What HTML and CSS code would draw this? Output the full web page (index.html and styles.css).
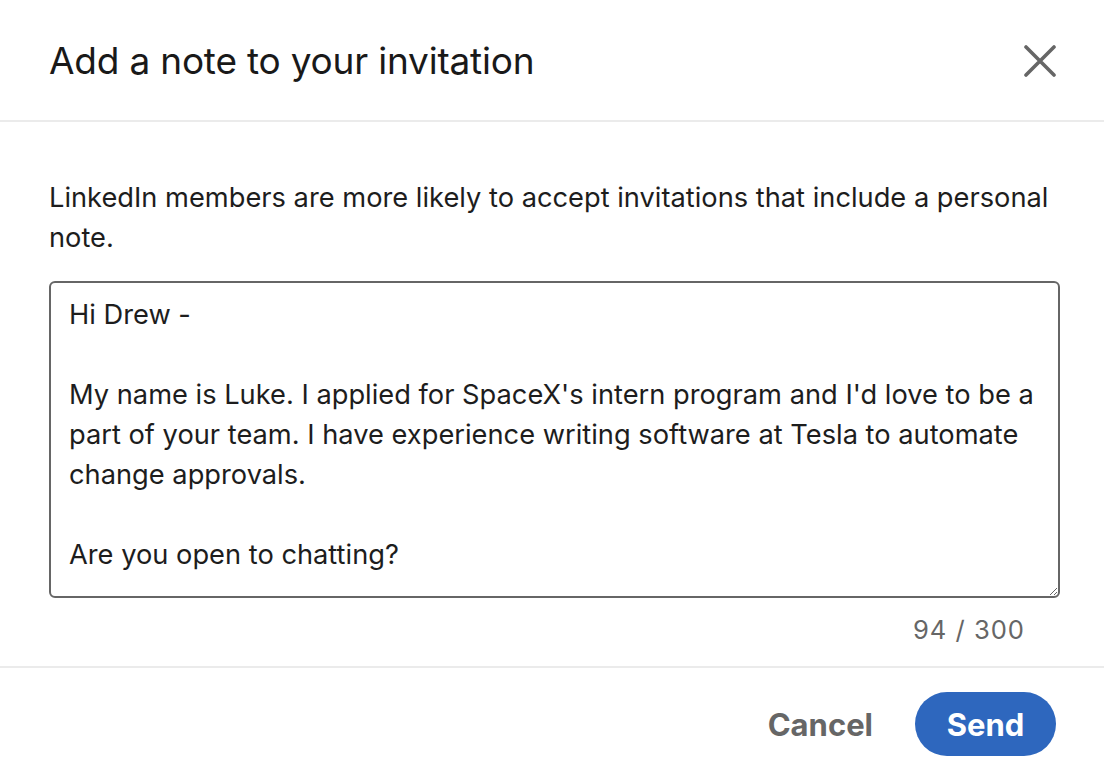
FILE: index.html
```html
<!DOCTYPE html>
<html lang="en">
<head>
<meta charset="utf-8">
<title>Add a note to your invitation</title>
<link rel="stylesheet" href="styles.css">
</head>
<body>
<div class="dialog" role="dialog" aria-labelledby="dlg-title">
  <header class="dialog-header">
    <h2 id="dlg-title" class="dialog-title">Add a note to your invitation</h2>
    <button class="close-btn" aria-label="Dismiss">
      <svg width="32" height="32" viewBox="0 0 32 32" aria-hidden="true">
        <path d="M2 2 L30 30 M30 2 L2 30" stroke="#666666" stroke-width="3.6" stroke-linecap="round" fill="none"/>
      </svg>
    </button>
  </header>
  <div class="dialog-body">
    <p class="hint">LinkedIn members are more likely to accept invitations that include a personal note.</p>
    <textarea class="note" aria-label="Your message">Hi Drew -

My name is Luke. I applied for SpaceX's intern program and I'd love to be a part of your team. I have experience writing software at Tesla to automate change approvals.

Are you open to chatting?</textarea>
    <div class="counter">94 / 300</div>
  </div>
  <footer class="dialog-footer">
    <button class="btn-cancel">Cancel</button>
    <button class="btn-send">Send</button>
  </footer>
</div>
</body>
</html>
```

FILE: styles.css
```css
* { box-sizing: border-box; }

html, body {
  margin: 0;
  padding: 0;
  background: #ffffff;
}

body {
  font-family: Inter, "Noto Sans", "Liberation Sans", sans-serif;
  color: #1d1d1d;
}

.dialog {
  width: 1104px;
  height: 778px;
  display: flex;
  flex-direction: column;
  background: #ffffff;
}

.dialog-header {
  height: 122px;
  display: flex;
  align-items: center;
  justify-content: space-between;
  padding: 0 48px 0 49px;
  border-bottom: 2px solid #ebebeb;
}

.dialog-title {
  margin: 0;
  font-size: 37px;
  font-weight: 400;
  color: #191919;
  letter-spacing: -0.2px;
}

.close-btn {
  width: 32px;
  height: 32px;
  padding: 0;
  border: 0;
  background: transparent;
  display: flex;
  align-items: center;
  justify-content: center;
  margin-top: 2px;
}

.dialog-body {
  padding: 56px 44px 16px 49px;
  display: flex;
  flex-direction: column;
}

.hint {
  margin: 0 0 23px 0;
  font-size: 27.25px;
  line-height: 40px;
  color: #1d1d1d;
}

.note {
  display: block;
  width: 1011px;
  height: 317px;
  padding: 12px 18px;
  border: 2px solid #666666;
  border-radius: 6px;
  font-family: Inter, "Noto Sans", "Liberation Sans", sans-serif;
  font-size: 27.25px;
  line-height: 40px;
  color: #1d1d1d;
  background: #ffffff;
  resize: vertical;
  outline: none;
}

.counter {
  margin-top: 12px;
  align-self: flex-end;
  margin-right: 35px;
  font-size: 25.6px;
  letter-spacing: 1px;
  line-height: 40px;
  color: #666666;
}

.dialog-footer {
  flex: 1;
  display: flex;
  align-items: center;
  justify-content: flex-end;
  gap: 42px;
  padding: 2px 48px 0 0;
  border-top: 2px solid #ebebeb;
}

.btn-cancel {
  border: 0;
  background: transparent;
  padding: 0;
  font-family: Inter, "Noto Sans", "Liberation Sans", sans-serif;
  font-size: 31px;
  font-weight: 700;
  color: #666666;
}

.btn-send {
  width: 141px;
  height: 64px;
  border: 0;
  border-radius: 32px;
  background: #2e67be;
  color: #ffffff;
  font-family: Inter, "Noto Sans", "Liberation Sans", sans-serif;
  font-size: 31px;
  font-weight: 700;
  padding: 0;
}
```
